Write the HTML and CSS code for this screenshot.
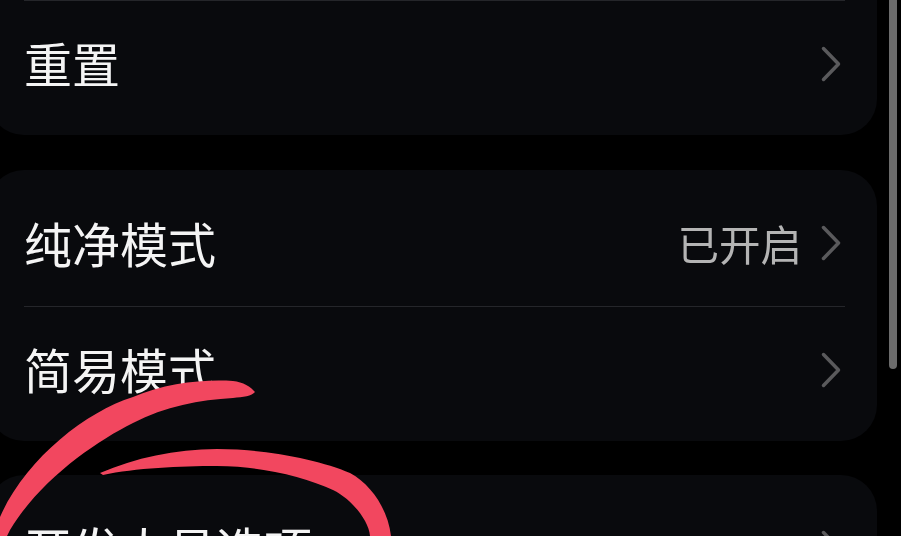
FILE: index.html
```html
<!DOCTYPE html>
<html lang="zh-CN">
<head>
<meta charset="utf-8">
<title>设置</title>
<link rel="stylesheet" href="styles.css">
</head>
<body>
<main class="screen">
  <div class="list">
    <section class="card card-cut">
      <div class="row divided">
        <span class="label">重置</span>
        <span class="end"><svg class="chev" viewBox="0 0 20 36"><path d="M2.5 2.5 17.5 18 2.5 33.5"/></svg></span>
      </div>
    </section>
    <section class="card">
      <div class="row">
        <span class="label">纯净模式</span>
        <span class="end"><span class="value">已开启</span><svg class="chev" viewBox="0 0 20 36"><path d="M2.5 2.5 17.5 18 2.5 33.5"/></svg></span>
      </div>
      <div class="row divided">
        <span class="label">简易模式</span>
        <span class="end"><svg class="chev" viewBox="0 0 20 36"><path d="M2.5 2.5 17.5 18 2.5 33.5"/></svg></span>
      </div>
    </section>
    <section class="card">
      <div class="row">
        <span class="label">开发人员选项</span>
        <span class="end"><svg class="chev" viewBox="0 0 20 36"><path d="M2.5 2.5 17.5 18 2.5 33.5"/></svg></span>
      </div>
    </section>
  </div>
  <div class="scrollbar"></div>
  <svg class="scribble" viewBox="0 0 901 536">
    <path d="M0 517C25 460 85 412 133 397C165 383 205 379 233 381C243 382 251 387 255 392C252 396 243 397 233 398C200 400 165 406 133 423C95 442 40 480 10 530L7 536H0Z"/>
    <path d="M100 473C135 458 175 449 217 449C265 449 320 460 350 473C372 485 388 510 391 536H370C369 520 350 498 333 490C305 477 262 466 217 466C180 466 135 468 103 475Z"/>
  </svg>
</main>
</body>
</html>
```
FILE: styles.css
```css
html, body {
  margin: 0;
  padding: 0;
  background: #000;
}
.screen {
  position: relative;
  width: 901px;
  height: 536px;
  overflow: hidden;
  background: #000;
  font-family: "Noto Sans CJK SC", "Noto Sans", sans-serif;
}
.list {
  display: flex;
  flex-direction: column;
  gap: 34px;
  margin-left: -12px;
  width: 889px;
  filter: blur(0.6px);
}
.card {
  background: #090a0d;
  border-radius: 36px;
  padding: 10px 32px 9px 36px;
}
.card-cut {
  border-radius: 0 0 36px 36px;
  padding-top: 0;
  margin-bottom: 1px;
}
.row {
  display: flex;
  align-items: center;
  justify-content: space-between;
  height: 126px;
  box-sizing: border-box;
}
.divided {
  border-top: 1px solid #25262a;
}
.label {
  font-size: 48px;
  font-weight: 400;
  line-height: 60px;
  margin-bottom: 3px;
  color: #f4f4f4;
}
.end {
  display: flex;
  align-items: center;
  gap: 19px;
  padding-right: 4px;
}
.value {
  font-size: 41.5px;
  line-height: 50px;
  color: #b4b4b4;
}
.chev {
  display: block;
  width: 20px;
  height: 36px;
  fill: none;
  stroke: #5a5a5c;
  stroke-width: 3.5;
  stroke-linecap: round;
  stroke-linejoin: round;
}
.scrollbar {
  position: absolute;
  left: 889px;
  top: -8px;
  width: 8px;
  height: 377px;
  border-radius: 4px;
  background: #6b6b6b;
}
.scribble {
  position: absolute;
  inset: 0;
  width: 901px;
  height: 536px;
  fill: #f2475f;
  filter: blur(0.4px);
}
```
